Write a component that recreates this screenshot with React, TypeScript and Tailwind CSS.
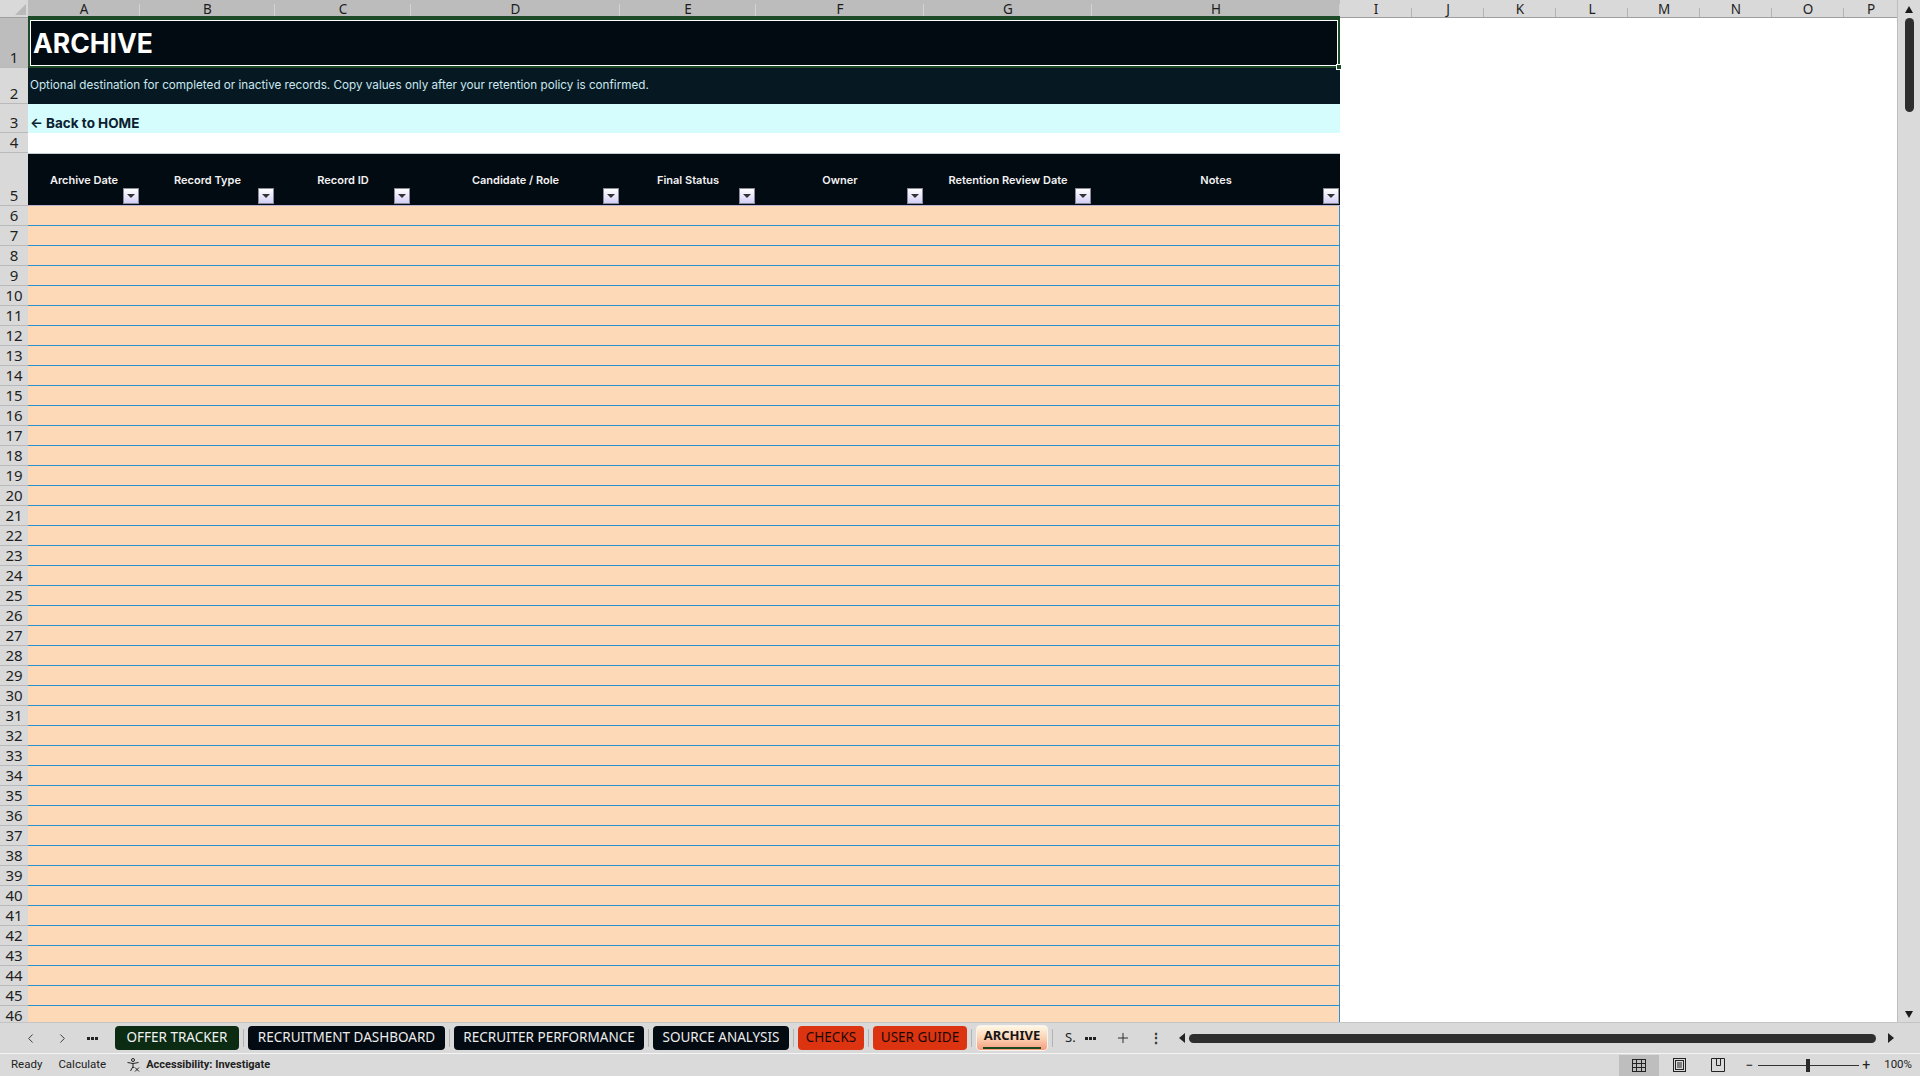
import React from "react";
import { ChevronLeft, ChevronRight, Plus } from "lucide-react";

const cols = [
  { k: "A", h: "Archive Date", w: "w-[112px]" },
  { k: "B", h: "Record Type", w: "w-[135px]" },
  { k: "C", h: "Record ID", w: "w-[136px]" },
  { k: "D", h: "Candidate / Role", w: "w-[209px]" },
  { k: "E", h: "Final Status", w: "w-[136px]" },
  { k: "F", h: "Owner", w: "w-[168px]" },
  { k: "G", h: "Retention Review Date", w: "w-[168px]" },
  { k: "H", h: "Notes", w: "w-[248px]" },
];

const rest = [
  { k: "I", w: "w-[72px]" },
  { k: "J", w: "w-[72px]" },
  { k: "K", w: "w-[72px]" },
  { k: "L", w: "w-[72px]" },
  { k: "M", w: "w-[72px]" },
  { k: "N", w: "w-[72px]" },
  { k: "O", w: "w-[72px]" },
  { k: "P", w: "w-[54px]" },
];

const dataRows = Array.from({ length: 41 }, (_, i) => i + 6);

const tabs = [
  { t: "OFFER TRACKER", c: "w-[124px] bg-[#0b2b12] text-[#f2f2f2]" },
  { t: "RECRUITMENT DASHBOARD", c: "w-[197px] bg-[#030a12] text-[#ececec]" },
  { t: "RECRUITER PERFORMANCE", c: "w-[190px] bg-[#030a12] text-[#ececec]" },
  { t: "SOURCE ANALYSIS", c: "w-[136px] bg-[#030a12] text-[#ececec]" },
  { t: "CHECKS", c: "w-[66px] bg-[#dc3410] text-[#1c0903]" },
  { t: "USER GUIDE", c: "w-[94px] bg-[#dc3410] text-[#1c0903]" },
];

const RowNum: React.FC<{ n: number; h: string; sel?: boolean }> = ({ n, h, sel }) => (
  <div
    className={`${h} w-[28px] shrink-0 flex items-end justify-center border-b border-[#b9b9b9] pb-[2px] text-[15px] leading-none text-[#1f1f1f] ${
      sel ? "bg-[#bdbdbd]" : "bg-[#d9d9d9]"
    }`}
  >
    {n}
  </div>
);

const FilterButton: React.FC = () => (
  <div className="absolute right-[1px] bottom-[1px] w-[16px] h-[16px] border border-[#8a8a98] bg-gradient-to-b from-white to-[#d4cff6] flex items-center justify-center">
    <div className="w-0 h-0 border-l-[4px] border-r-[4px] border-t-[4px] border-l-transparent border-r-transparent border-t-[#333]" />
  </div>
);

const Dots: React.FC = () => (
  <div className="flex gap-[1px]">
    <div className="w-[3px] h-[3px] bg-[#222]" />
    <div className="w-[3px] h-[3px] bg-[#222]" />
    <div className="w-[3px] h-[3px] bg-[#222]" />
  </div>
);

const Sep: React.FC = () => <div className="w-px h-[18px] bg-[#b3b3b3] mx-[4px]" />;

export default function App() {
  return (
    <div className="w-[1920px] h-[1076px] flex flex-col overflow-hidden bg-[#d9d9d9] font-['Inter',sans-serif]">
      <div className="flex h-[1022px] shrink-0">
        <div className="w-[1898px] flex flex-col overflow-hidden bg-white border-r border-[#bdbdbd]">
          {/* column letters */}
          <div className="flex h-[18px] shrink-0 font-['Noto_Sans',sans-serif] text-[13.5px] leading-[16px]">
            <div className="w-[28px] shrink-0 bg-[#d9d9d9] relative border-b border-[#a0a0a0]">
              <svg className="absolute right-[2px] bottom-[2px]" width="11" height="11" viewBox="0 0 11 11">
                <polygon points="11,0 11,11 0,11" fill="#b9b9b9" />
              </svg>
            </div>
            {cols.map((c) => (
              <div
                key={c.k}
                className={`${c.w} shrink-0 bg-[#bcbcbc] text-[#1c1c1c] flex items-start justify-center pt-[1px] border-b-2 border-[#1d4a27] relative`}
              >
                {c.k}
                <div className="absolute right-0 top-[4px] w-px h-[12px] bg-[#d3d3d3]" />
              </div>
            ))}
            {rest.map((c) => (
              <div
                key={c.k}
                className={`${c.w} shrink-0 bg-[#d9d9d9] text-[#222] flex items-start justify-center pt-[1px] border-b border-[#9e9e9e] relative`}
              >
                {c.k}
                <div className="absolute right-0 top-[8px] w-px h-[9px] bg-[#b4b4b4]" />
              </div>
            ))}
          </div>

          {/* row 1 */}
          <div className="flex font-['Noto_Sans',sans-serif]">
            <RowNum n={1} h="h-[50px]" sel />
            <div className="w-[1312px] h-[50px] shrink-0 relative z-10 border-2 border-[#1c4a26] bg-[#020a12]">
              <div className="h-full border border-white flex items-center pl-[2px]">
                <span className="font-['Inter',sans-serif] font-bold text-[26.5px] leading-none text-white">ARCHIVE</span>
              </div>
              <div className="absolute right-[-4px] bottom-[-4px] w-[6px] h-[6px] bg-[#1c4a26] border border-white" />
            </div>
            <div className="flex-1 bg-white" />
          </div>

          {/* row 2 */}
          <div className="flex font-['Noto_Sans',sans-serif]">
            <RowNum n={2} h="h-[36px]" />
            <div className="w-[1312px] h-[36px] shrink-0 bg-[#061923] flex items-center pl-[2px]">
              <span className="font-['Inter',sans-serif] text-[11.7px] text-[#cbe7ef]">
                Optional destination for completed or inactive records. Copy values only after your retention policy is confirmed.
              </span>
            </div>
            <div className="flex-1 bg-white" />
          </div>

          {/* row 3 */}
          <div className="flex font-['Noto_Sans',sans-serif]">
            <RowNum n={3} h="h-[29px]" />
            <div className="w-[1312px] h-[29px] shrink-0 bg-[#d5fdfd] flex items-end pb-[3px] pl-[2px]">
              <span className="font-['Inter',sans-serif] font-bold text-[13.5px] leading-none text-[#0b2030]">
                ← Back to HOME
              </span>
            </div>
            <div className="flex-1 bg-white" />
          </div>

          {/* row 4 */}
          <div className="flex font-['Noto_Sans',sans-serif]">
            <RowNum n={4} h="h-[20px]" />
            <div className="w-[1312px] h-[20px] shrink-0 bg-white" />
            <div className="flex-1 bg-white" />
          </div>

          {/* row 5 header */}
          <div className="flex font-['Noto_Sans',sans-serif]">
            <RowNum n={5} h="h-[53px]" />
            <div className="w-[1312px] h-[53px] shrink-0 bg-[#020a12] border-t border-[#c3cbd3] border-b border-b-[#b9b3d6] flex">
              {cols.map((c) => (
                <div key={c.k} className={`${c.w} shrink-0 relative flex justify-center pt-[20px]`}>
                  <span className="font-['Inter',sans-serif] font-semibold text-[11px] leading-[13px] text-[#f2f2f2]">
                    {c.h}
                  </span>
                  <FilterButton />
                </div>
              ))}
            </div>
            <div className="flex-1 bg-white" />
          </div>

          {/* data rows */}
          {dataRows.map((n) => (
            <div key={n} className="flex font-['Noto_Sans',sans-serif]">
              <RowNum n={n} h="h-[20px]" />
              <div className="w-[1312px] h-[20px] shrink-0 bg-[#fdd9b7] border-b border-r border-[#2b90cf]" />
              <div className="flex-1 bg-white" />
            </div>
          ))}
        </div>

        {/* vertical scrollbar */}
        <div className="w-[22px] shrink-0 bg-[#dadada] relative">
          <div className="absolute left-[7px] top-[6px] w-0 h-0 border-l-[4px] border-r-[4px] border-b-[7px] border-l-transparent border-r-transparent border-b-[#1a1a1a]" />
          <div className="absolute left-[7px] top-[18px] w-[9px] h-[94px] rounded-full bg-[#2e2e2e]" />
          <div className="absolute left-[7px] bottom-[4px] w-0 h-0 border-l-[4px] border-r-[4px] border-t-[7px] border-l-transparent border-r-transparent border-t-[#1a1a1a]" />
        </div>
      </div>

      {/* sheet tabs */}
      <div className="h-[31px] shrink-0 flex items-center bg-[#d9d9d9] border-t border-[#c4c4c4] font-['Noto_Sans',sans-serif] text-[13.5px]">
        <div className="w-[115px] shrink-0 flex items-center text-[#333]">
          <ChevronLeft size={15} strokeWidth={1.5} className="ml-[23px]" />
          <ChevronRight size={15} strokeWidth={1.5} className="ml-[17px]" />
          <div className="ml-[17px]">
            <Dots />
          </div>
        </div>
        {tabs.map((t) => (
          <React.Fragment key={t.t}>
            <div className={`${t.c} h-[24px] shrink-0 rounded-[4px] flex items-center justify-center leading-none`}>
              {t.t}
            </div>
            <Sep />
          </React.Fragment>
        ))}
        <div className="w-[72px] h-[26px] shrink-0 rounded-[4px] border border-[#f7f3ee] bg-gradient-to-b from-[#fff8e6] via-[#fbd2b3] to-[#f59c7e] flex flex-col items-center justify-center pt-[2px]">
          <span className="font-bold text-[13px] leading-none text-[#151515]">ARCHIVE</span>
          <div className="w-[58px] h-[2px] bg-[#1c4a1e] mt-[5px]" />
        </div>
        <Sep />
        <span className="ml-[8px] text-[13px] text-[#222]">S.</span>
        <div className="ml-[9px]">
          <Dots />
        </div>
        <Plus size={16} strokeWidth={1.4} className="ml-[19px] text-[#222]" />
        <span className="ml-[18px] text-[14px] font-bold text-[#333] leading-none">⋮</span>
        <div className="ml-[16px] w-0 h-0 border-t-[5px] border-b-[5px] border-r-[6px] border-t-transparent border-b-transparent border-r-[#222]" />
        <div className="ml-[4px] w-[687px] h-[9px] rounded-full bg-[#2e2e2e]" />
        <div className="ml-[12px] w-0 h-0 border-t-[5px] border-b-[5px] border-l-[6px] border-t-transparent border-b-transparent border-l-[#222]" />
      </div>

      <div className="h-px shrink-0 bg-[#f5f5f5]" />

      {/* status bar */}
      <div className="flex-1 flex items-center bg-[#dadada] font-['Roboto',sans-serif] text-[11.5px] text-[#222]">
        <span className="ml-[11px]">Ready</span>
        <span className="ml-[16px]">Calculate</span>
        <svg className="ml-[20px]" width="14" height="14" viewBox="0 0 14 14" fill="none" stroke="#222" strokeWidth="1">
          <circle cx="7" cy="2" r="1.5" />
          <path d="M1.5 4.5 L7 5.5 L12.5 4.5" />
          <path d="M7 5.5 L7 8.5 M7 8.5 L4.5 13 M7 8.5 L8 10" />
          <path d="M9 9.5 L13 13.5 M13 9.5 L9 13.5" />
        </svg>
        <span className="ml-[6px] font-bold text-[11px]">Accessibility: Investigate</span>
        <div className="flex-1" />
        <div className="w-[40px] h-[21px] bg-[#bebebe] flex items-center justify-center">
          <svg width="14" height="13" viewBox="0 0 14 13" fill="none" stroke="#222" strokeWidth="1">
            <rect x="0.5" y="0.5" width="13" height="12" />
            <path d="M0.5 4.5 H13.5 M0.5 8.5 H13.5 M4.5 0.5 V12.5 M9.5 0.5 V12.5" />
          </svg>
        </div>
        <div className="w-[40px] flex items-center justify-center">
          <svg width="13" height="14" viewBox="0 0 13 14" fill="none" stroke="#222" strokeWidth="1">
            <rect x="0.5" y="0.5" width="12" height="13" />
            <rect x="2.5" y="2.5" width="8" height="9" />
            <path d="M4 5 H9 M4 7 H9 M4 9 H9" />
          </svg>
        </div>
        <div className="w-[38px] flex items-center justify-center">
          <svg width="14" height="14" viewBox="0 0 14 14" fill="none" stroke="#222" strokeWidth="1">
            <path d="M0.5 0.5 H13.5 V13.5 H0.5 Z" />
            <path d="M5.5 0.5 V7.5 H9.5 V0.5" />
          </svg>
        </div>
        <span className="ml-[8px] text-[14px] leading-none">−</span>
        <div className="ml-[5px] w-[101px] h-px bg-[#333] relative">
          <div className="absolute left-[48px] top-[-6px] w-[4px] h-[13px] bg-[#2a2a2a]" />
        </div>
        <span className="ml-[3px] text-[14px] leading-none">+</span>
        <span className="ml-[14px] mr-[8px] text-[11.5px]">100%</span>
      </div>
    </div>
  );
}
